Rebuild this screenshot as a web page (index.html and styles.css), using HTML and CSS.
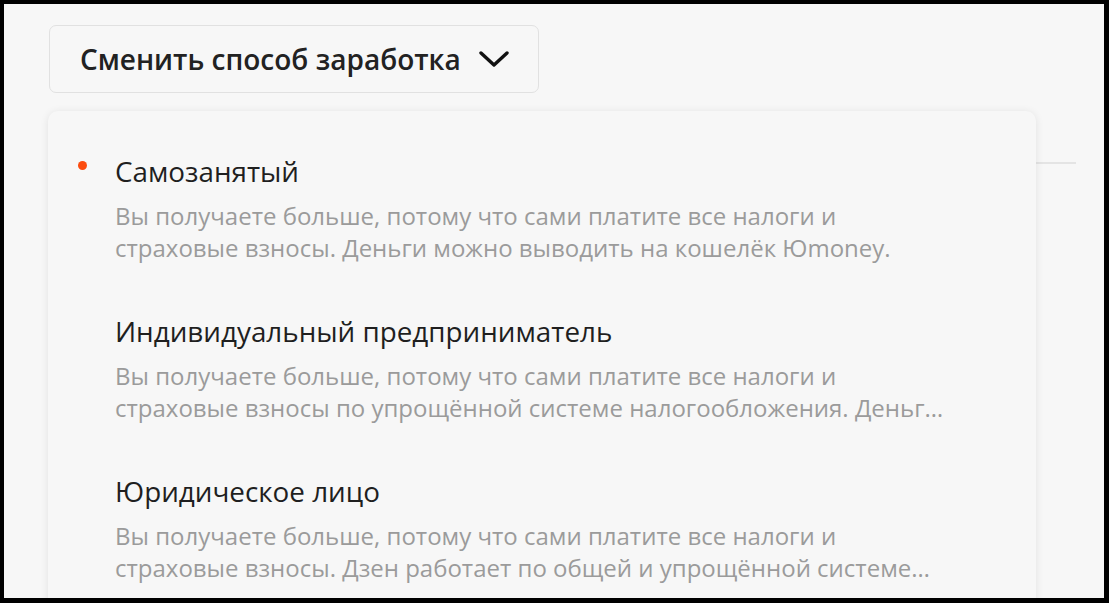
FILE: index.html
```html
<!DOCTYPE html>
<html lang="ru">
<head>
<meta charset="utf-8">
<title>Сменить способ заработка</title>
<link rel="stylesheet" href="styles.css">
</head>
<body>
<div class="frame">
  <div class="switcher">
    <button class="switch-btn" type="button">
      <span class="switch-label">Сменить способ заработка</span>
      <svg class="chevron" width="30" height="16" viewBox="0 0 30 16" aria-hidden="true">
        <path d="M2 2 L15 14 L28 2" fill="none" stroke="#111" stroke-width="3.4" stroke-linecap="round" stroke-linejoin="round"/>
      </svg>
    </button>
    <div class="menu">
      <div class="item is-active">
        <span class="dot"></span>
        <div class="item-title">Самозанятый</div>
        <div class="item-desc">Вы получаете больше, потому что сами платите все налоги и страховые взносы. Деньги можно выводить на кошелёк Юmoney.</div>
      </div>
      <div class="item">
        <div class="item-title">Индивидуальный предприниматель</div>
        <div class="item-desc">Вы получаете больше, потому что сами платите все налоги и страховые взносы по упрощённой системе налогообложения. Деньги можно выводить на расчётный счёт.</div>
      </div>
      <div class="item">
        <div class="item-title">Юридическое лицо</div>
        <div class="item-desc">Вы получаете больше, потому что сами платите все налоги и страховые взносы. Дзен работает по общей и упрощённой системе налогообложения.</div>
      </div>
    </div>
  </div>
  <div class="divider"></div>
</div>
</body>
</html>
```
FILE: styles.css
```css
html, body {
  margin: 0;
  padding: 0;
  background: #f7f7f7;
}

.frame {
  box-sizing: border-box;
  width: 1109px;
  height: 603px;
  border-style: solid;
  border-color: #000;
  border-width: 4px 5px 5px 4px;
  background: #f7f7f7;
  padding: 21px 28px 0 45px;
  overflow: hidden;
  font-family: "Open Sans", "Noto Sans", "DejaVu Sans", sans-serif;
}

.switcher {
  position: relative;
  display: inline-block;
}

.switch-btn {
  box-sizing: border-box;
  height: 68px;
  display: inline-flex;
  align-items: center;
  gap: 18px;
  padding: 0 29px 0 30px;
  background: #f7f7f7;
  border: 1px solid #e1e1e1;
  border-radius: 7px;
  font-family: inherit;
  cursor: pointer;
}

.switch-label {
  font-size: 28px;
  font-weight: 600;
  color: #222;
}

.chevron {
  display: block;
}

.menu {
  position: absolute;
  top: calc(100% + 18px);
  left: -1px;
  width: 988px;
  box-sizing: border-box;
  padding: 44px 80px 40px 67px;
  background: #f7f7f7;
  border-radius: 10px;
  box-shadow: 0 1px 8px rgba(0, 0, 0, 0.09);
  display: flex;
  flex-direction: column;
  gap: 51px;
  z-index: 2;
}

.item {
  position: relative;
}

.dot {
  position: absolute;
  left: -37px;
  top: 6px;
  width: 9px;
  height: 9px;
  border-radius: 50%;
  background: #fc4c0f;
}

.item-title {
  font-size: 27.8px;
  line-height: 32px;
  color: #1f1f1f;
}

.item-desc {
  margin-top: 13px;
  font-size: 24px;
  line-height: 32px;
  color: #9b9b9b;
  display: -webkit-box;
  -webkit-box-orient: vertical;
  -webkit-line-clamp: 2;
  overflow: hidden;
}

.divider {
  margin-top: 69px;
  height: 2px;
  background: #e4e4e4;
}
```
